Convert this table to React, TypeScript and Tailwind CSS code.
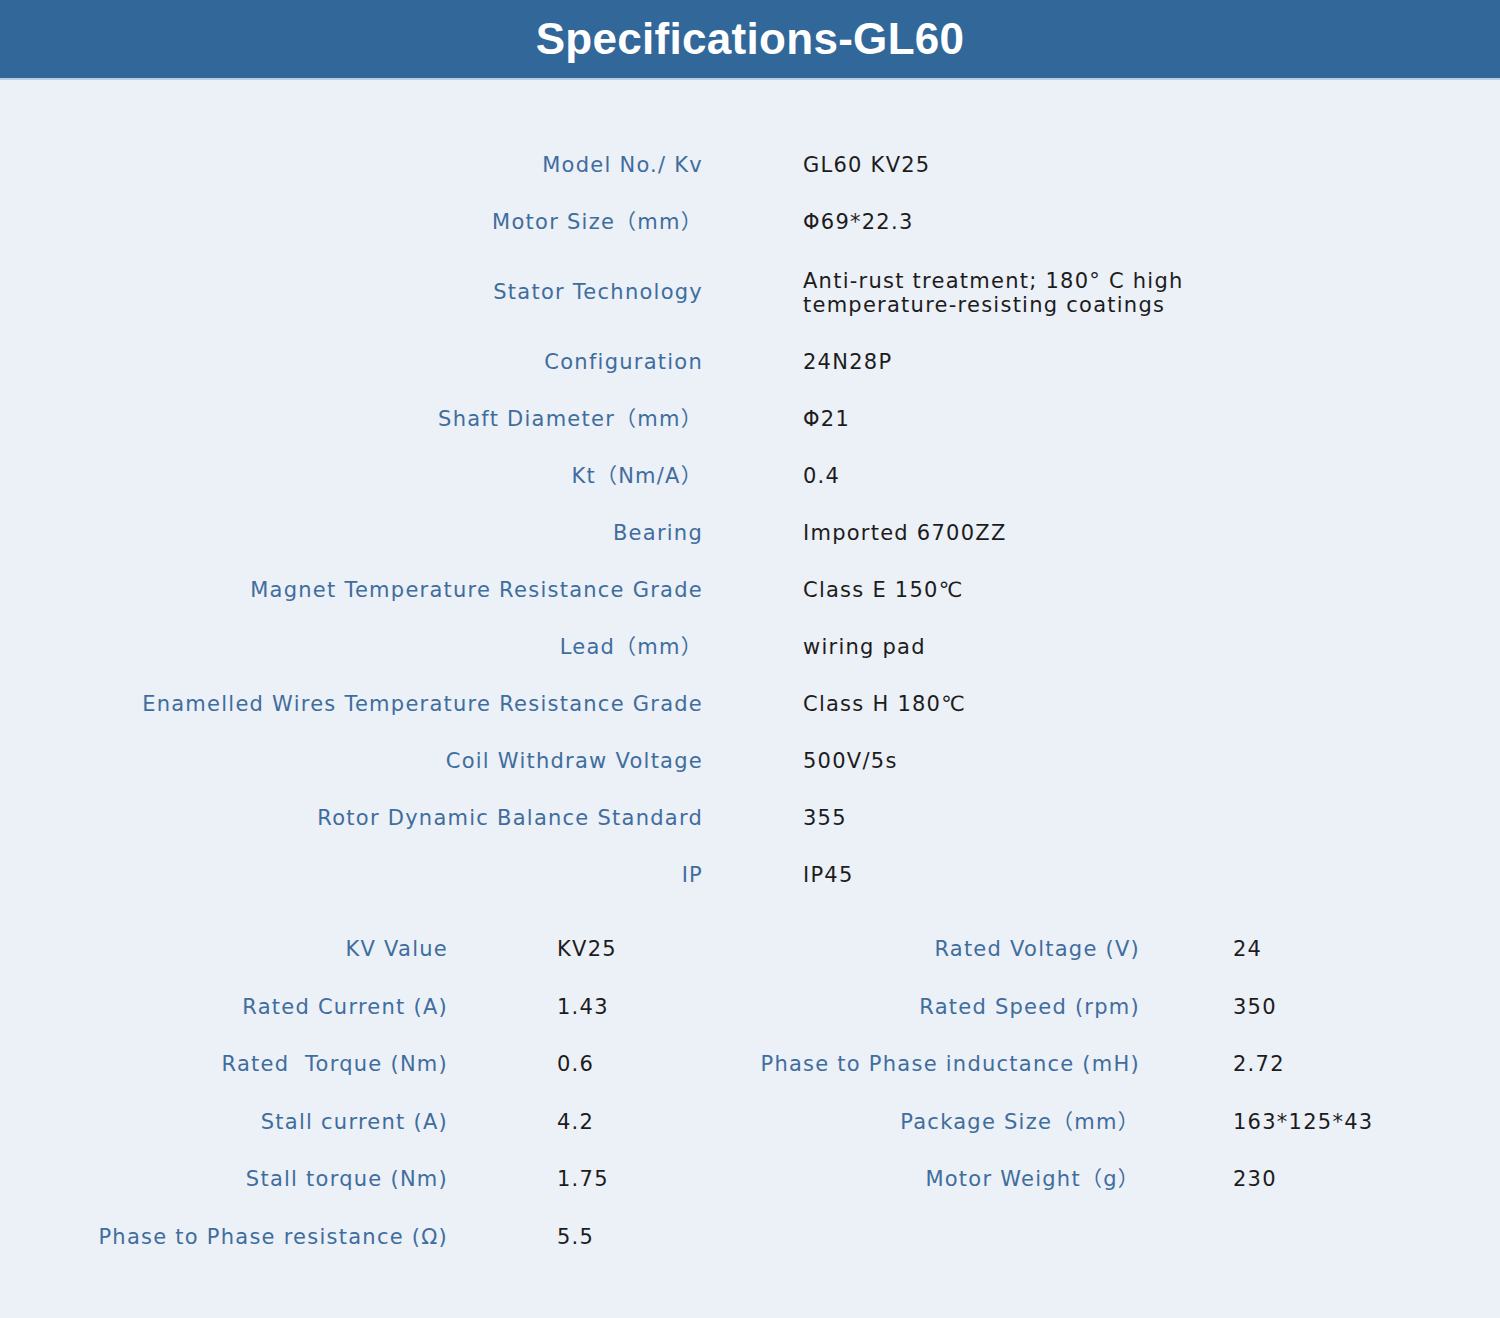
import React from 'react';

const font = { fontFamily: '"DejaVu Sans", "Noto Sans CJK JP", sans-serif' };
const headFont = { fontFamily: '"Liberation Sans", sans-serif' };

const topRows: { label: string; value: React.ReactNode; tall?: boolean }[] = [
  { label: 'Model No./ Kv', value: 'GL60 KV25' },
  { label: 'Motor Size（mm）', value: 'Φ69*22.3' },
  {
    label: 'Stator Technology',
    value: (
      <span className="block leading-[24px]">
        Anti-rust treatment; 180° C high
        <br />
        temperature-resisting coatings
      </span>
    ),
    tall: true,
  },
  { label: 'Configuration', value: '24N28P' },
  { label: 'Shaft Diameter（mm）', value: 'Φ21' },
  { label: 'Kt（Nm/A）', value: '0.4' },
  { label: 'Bearing', value: 'Imported 6700ZZ' },
  { label: 'Magnet Temperature Resistance Grade', value: 'Class E 150℃' },
  { label: 'Lead（mm）', value: 'wiring pad' },
  { label: 'Enamelled Wires Temperature Resistance Grade', value: 'Class H 180℃' },
  { label: 'Coil Withdraw Voltage', value: '500V/5s' },
  { label: 'Rotor Dynamic Balance Standard', value: '355' },
  { label: 'IP', value: 'IP45' },
];

const leftRows = [
  ['KV Value', 'KV25'],
  ['Rated Current (A)', '1.43'],
  ['Rated  Torque (Nm)', '0.6'],
  ['Stall current (A)', '4.2'],
  ['Stall torque (Nm)', '1.75'],
  ['Phase to Phase resistance (Ω)', '5.5'],
];

const rightRows = [
  ['Rated Voltage (V)', '24'],
  ['Rated Speed (rpm)', '350'],
  ['Phase to Phase inductance (mH)', '2.72'],
  ['Package Size（mm）', '163*125*43'],
  ['Motor Weight（g）', '230'],
];

export default function App() {
  return (
    <div className="w-[1500px] h-[1318px] bg-[#ecf0f7]" style={font}>
      {/* Header */}
      <div className="h-[80px] bg-[#32679a] border-b-2 border-[#b9cde3] flex items-center justify-center">
        <h1 className="text-white font-bold text-[44px] tracking-[0.3px] leading-none" style={headFont}>
          Specifications-GL60
        </h1>
      </div>

      {/* Main spec table */}
      <div className="pt-[57px] text-[21px] tracking-[1.25px]">
        {topRows.map((row) => (
          <div key={row.label} className={`flex items-center ${row.tall ? 'h-[83px]' : 'h-[57px]'}`}>
            <div className="w-[703px] text-right text-[#3f6d9d] whitespace-pre">{row.label}</div>
            <div className="pl-[100px] text-[#1c1c1c]">{row.value}</div>
          </div>
        ))}
      </div>

      {/* Electrical parameters */}
      <div className="mt-[17px] flex text-[21px] tracking-[1.25px]">
        <div className="w-[753px]">
          {leftRows.map(([label, value]) => (
            <div key={label} className="flex items-center h-[57.6px]">
              <div className="w-[448px] text-right text-[#3f6d9d] whitespace-pre">{label}</div>
              <div className="pl-[109px] text-[#1c1c1c]">{value}</div>
            </div>
          ))}
        </div>
        <div>
          {rightRows.map(([label, value]) => (
            <div key={label} className="flex items-center h-[57.6px]">
              <div className="w-[387px] text-right text-[#3f6d9d] whitespace-pre">{label}</div>
              <div className="pl-[93px] text-[#1c1c1c]">{value}</div>
            </div>
          ))}
        </div>
      </div>
    </div>
  );
}
